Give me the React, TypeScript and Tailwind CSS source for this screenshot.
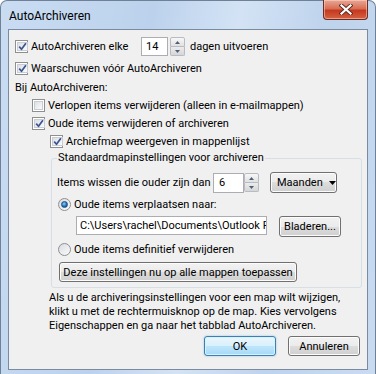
import React from "react";

function Check({ checked }: { checked: boolean }) {
  return (
    <span className="w-[13px] h-[13px] shrink-0 border border-[#8e8f8f] bg-white p-[1px] flex">
      <span className="flex-1 border border-[#c9cdd3] bg-gradient-to-br from-[#dcdfe4] to-[#fbfbfb] flex items-center justify-center">
        {checked && (
          <svg width="9" height="9" viewBox="0 0 9 9">
            <path d="M1.2 4.6 L3.5 7.3 L7.9 1.2" fill="none" stroke="#3b5592" strokeWidth="1.7" strokeLinejoin="round" />
          </svg>
        )}
      </span>
    </span>
  );
}

function Radio({ checked }: { checked: boolean }) {
  return (
    <span className="w-[13px] h-[13px] shrink-0 rounded-full border border-[#8e8f8f] bg-gradient-to-br from-[#d9dce1] to-[#fbfbfb] flex items-center justify-center">
      {checked && (
        <span className="w-[7px] h-[7px] rounded-full bg-[radial-gradient(circle_at_40%_35%,#8fd0f4,#1c6cb3_60%,#123e73)] border border-[#1d4d86]" />
      )}
    </span>
  );
}

function Spin() {
  return (
    <div className="flex flex-col w-[15px] h-[19px] shrink-0">
      <div className="flex-1 border border-[#b8bcc2] rounded-t-[2px] bg-gradient-to-b from-[#f7f7f7] to-[#e1e1e1] flex items-center justify-center">
        <svg width="5" height="3" viewBox="0 0 5 3"><path d="M0 3 L2.5 0 L5 3 Z" fill="#4c607a" /></svg>
      </div>
      <div className="flex-1 border border-t-0 border-[#b8bcc2] rounded-b-[2px] bg-gradient-to-b from-[#ececec] to-[#d6d6d6] flex items-center justify-center">
        <svg width="5" height="3" viewBox="0 0 5 3"><path d="M0 0 L2.5 3 L5 0 Z" fill="#4c607a" /></svg>
      </div>
    </div>
  );
}

function Btn({ children, className }: { children: React.ReactNode; className: string }) {
  return (
    <div
      className={
        "shrink-0 whitespace-nowrap rounded-[3px] border border-[#707070] flex items-center justify-center bg-[linear-gradient(#f2f2f2,#ebebeb_50%,#dddddd_50%,#cfcfcf)] shadow-[inset_0_0_0_1px_#fcfcfc] " +
        className
      }
    >
      {children}
    </div>
  );
}

export default function App() {
  return (
    <div className="w-[376px] h-[374px] bg-white font-['Roboto','Noto_Sans',sans-serif] text-[11px] text-black leading-none whitespace-nowrap">
      <div className="w-full h-full rounded-t-[7px] border border-b-0 border-[#6f8197] bg-[linear-gradient(100deg,#c9dcf2_0%,#bcd2ec_35%,#d3e3f5_55%,#bed3ec_75%,#c8dbf1_100%)] flex flex-col px-[7px] pb-[4px]">
        <div className="h-[28px] flex items-start justify-between shrink-0">
          <span className="pt-[9px] pl-[1px] text-[12px] text-black">AutoArchiveren</span>
          <div className="-mt-[1px] w-[45px] h-[20px] rounded-b-[4px] border border-t-0 border-[#6e2b20] bg-[linear-gradient(#e9a896,#d86f55_45%,#c6391f_55%,#d46243)] flex items-center justify-center shadow-[inset_0_0_0_1px_rgba(255,220,210,0.5)]">
            <svg width="14" height="11" viewBox="0 0 14 11">
              <path d="M2.5 1.5 L11.5 9.5 M11.5 1.5 L2.5 9.5" stroke="#5a2a22" strokeWidth="4" strokeLinecap="square" />
              <path d="M2.5 1.5 L11.5 9.5 M11.5 1.5 L2.5 9.5" stroke="#ffffff" strokeWidth="2.2" strokeLinecap="square" />
            </svg>
          </div>
        </div>
        <div className="flex-1 min-h-0 border border-[#7a8ba0] bg-[#f0f0f0] flex flex-col pl-[6px] pr-[6px]">
          <div className="mt-[7px] h-[19px] flex items-center">
            <Check checked />
            <span className="ml-[3px] w-[110px] shrink-0">AutoArchiveren elke</span>
            <div className="w-[27px] h-[19px] border border-[#abadb3] bg-white flex items-center pl-[4px]">14</div>
            <div className="ml-[2px]"><Spin /></div>
            <span className="ml-[5px]">dagen uitvoeren</span>
          </div>
          <div className="mt-[3px] h-[19px] flex items-center">
            <Check checked />
            <span className="ml-[3px]">Waarschuwen vóór AutoArchiveren</span>
          </div>
          <div className="h-[18px] flex items-center">Bij AutoArchiveren:</div>
          <div className="h-[18px] flex items-center pl-[17px]">
            <Check checked={false} />
            <span className="ml-[3px]">Verlopen items verwijderen (alleen in e-mailmappen)</span>
          </div>
          <div className="h-[18px] flex items-center pl-[17px]">
            <Check checked />
            <span className="ml-[3px]">Oude items verwijderen of archiveren</span>
          </div>
          <div className="h-[18px] flex items-center pl-[35px]">
            <Check checked />
            <span className="ml-[3px]">Archiefmap weergeven in mappenlijst</span>
          </div>
          <fieldset className="ml-[36px] mr-[-1px] border border-[#d5dfe5] rounded-[3px] pl-[5px] pr-[5px] pb-[5px] flex flex-col">
            <legend className="px-[1px] h-[16px] leading-[16px]">Standaardmapinstellingen voor archiveren</legend>
            <div className="mt-[6px] h-[21px] flex items-center">
              <span className="w-[156px] shrink-0">Items wissen die ouder zijn dan</span>
              <div className="w-[31px] h-[20px] border border-[#abadb3] bg-white flex items-center pl-[5px]">6</div>
              <div><Spin /></div>
              <Btn className="ml-[11px] w-[67px] h-[21px] justify-start pl-[6px] gap-[6px]">
                <span>Maanden</span>
                <svg width="7" height="4" viewBox="0 0 7 4"><path d="M0 0 L7 0 L3.5 4 Z" fill="#000" /></svg>
              </Btn>
            </div>
            <div className="mt-[2px] h-[18px] flex items-center pl-[1px]">
              <Radio checked />
              <span className="ml-[3px]">Oude items verplaatsen naar:</span>
            </div>
            <div className="mt-[3px] h-[21px] flex items-start pl-[19px]">
              <div className="w-[191px] h-[19px] border border-[#abadb3] bg-white flex items-center pl-[3px] overflow-hidden">
                <span>C:\Users\rachel\Documents\Outlook Fil</span>
              </div>
              <Btn className="ml-[12px] w-[62px] h-[21px]">Bladeren...</Btn>
            </div>
            <div className="mt-[3px] h-[18px] flex items-center pl-[1px]">
              <Radio checked={false} />
              <span className="ml-[3px]">Oude items definitief verwijderen</span>
            </div>
            <div className="mt-[4px] flex pl-[2px]">
              <Btn className="w-[238px] h-[20px]">Deze instellingen nu op alle mappen toepassen</Btn>
            </div>
          </fieldset>
          <div className="mt-[3px] pl-[34px] leading-[14px]">
            Als u de archiveringsinstellingen voor een map wilt wijzigen,
            <br />
            klikt u met de rechtermuisknop op de map. Kies vervolgens
            <br />
            Eigenschappen en ga naar het tabblad AutoArchiveren.
          </div>
          <div className="mt-[3px] flex justify-end gap-[12px] pr-[1px]">
            <div className="w-[72px] h-[20px] rounded-[3px] border border-[#3c7fb1] bg-[linear-gradient(#eaf6fd,#d9f0fc_50%,#bee6fd_50%,#a7d9f5)] shadow-[inset_0_0_0_1px_#d8f1fd,0_0_2px_#7cc3ec] flex items-center justify-center">
              OK
            </div>
            <Btn className="w-[72px] h-[20px]">Annuleren</Btn>
          </div>
        </div>
      </div>
    </div>
  );
}
